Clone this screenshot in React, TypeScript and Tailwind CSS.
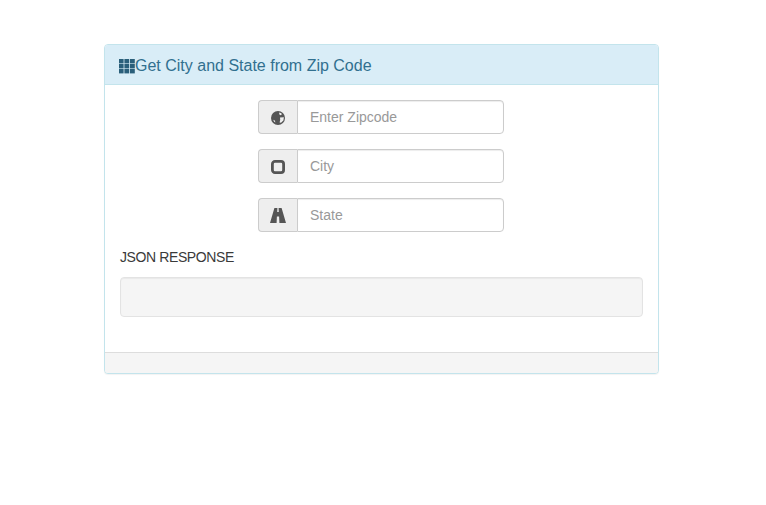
const GridIcon = () => (
  <svg width="16" height="16" viewBox="0 0 16 16" fill="#2a5f7a">
    <rect x="0" y="1" width="4.6" height="4.4" />
    <rect x="5.4" y="1" width="4.8" height="4.4" />
    <rect x="11" y="1" width="4.8" height="4.4" />
    <rect x="0" y="6" width="4.6" height="4.4" />
    <rect x="5.4" y="6" width="4.8" height="4.4" />
    <rect x="11" y="6" width="4.8" height="4.4" />
    <rect x="0" y="11" width="4.6" height="4.4" />
    <rect x="5.4" y="11" width="4.8" height="4.4" />
    <rect x="11" y="11" width="4.8" height="4.4" />
  </svg>
);

const GlobeIcon = () => (
  <svg width="14" height="14" viewBox="0 0 14 14">
    <circle cx="7" cy="7" r="7" fill="currentColor" />
    <path d="M8.2 1.4 L10.4 2.2 L10.8 3.6 L9.4 4.2 L8.2 3.2 Z M9 6.4 L12.9 6.2 L12.4 9.4 L10 11.8 L8.6 11.4 L9.2 8.8 Z" fill="#eeeeee" />
    <path d="M2.2 8.8 L3.8 9.4 L4.4 11.4 L3.2 10.8 Z" fill="#eeeeee" />
  </svg>
);

const StopIcon = () => (
  <svg width="14" height="14" viewBox="0 0 14 14">
    <rect x="1.4" y="1.4" width="11.2" height="11.2" rx="2.6" fill="none" stroke="currentColor" strokeWidth="2.8" />
  </svg>
);

const RoadIcon = () => (
  <svg width="16" height="15" viewBox="0 0 16 15" fill="currentColor">
    <path d="M4.4 0 H7.4 L7.2 4 H8.8 L8.6 0 H11.6 L16 15 H9.4 L9.1 8.5 H6.9 L6.6 15 H0 Z" />
  </svg>
);

function ZipInput({ icon, placeholder }: { icon: React.ReactNode; placeholder: string }) {
  return (
    <div className="flex h-[34px] w-[246px]">
      <span className="flex w-[39px] items-center justify-center rounded-l border border-r-0 border-[#cccccc] bg-[#eeeeee] pt-px text-[#555555]">
        {icon}
      </span>
      <input
        type="text"
        placeholder={placeholder}
        className="min-w-0 flex-1 rounded-r border border-[#cccccc] bg-white px-3 text-sm text-[#555555] shadow-[inset_0_1px_1px_rgba(0,0,0,0.075)] outline-none placeholder:text-[#999999]"
      />
    </div>
  );
}

export default function App() {
  return (
    <div className="min-h-[505px] bg-white pl-[104px] pt-[44px] font-['Liberation_Sans',Arial,sans-serif] text-sm text-[#333333]">
      <div className="w-[555px] overflow-hidden rounded border border-[#c3e4ec] bg-white shadow-[0_1px_1px_rgba(0,0,0,0.05)]">
        <div className="flex h-[40px] items-center border-b border-[#c3e4ec] bg-[#d9edf7] px-[14px] pt-[2px] text-base text-[#31708f]">
          <GridIcon />
          <span>Get City and State from Zip Code</span>
        </div>
        <div className="p-[15px]">
          <div className="flex flex-col items-center gap-[15px] pr-px">
            <ZipInput icon={<GlobeIcon />} placeholder="Enter Zipcode" />
            <ZipInput icon={<StopIcon />} placeholder="City" />
            <ZipInput icon={<RoadIcon />} placeholder="State" />
          </div>
          <div className="mt-[15px] leading-5 tracking-[-0.4px] text-[#3a3a3a]">JSON RESPONSE</div>
          <div className="mb-5 mt-[10px] h-[40px] rounded border border-[#e3e3e3] bg-[#f5f5f5] shadow-[inset_0_1px_1px_rgba(0,0,0,0.05)]" />
        </div>
        <div className="h-[21px] border-t border-[#dddddd] bg-[#f5f5f5]" />
      </div>
    </div>
  );
}
